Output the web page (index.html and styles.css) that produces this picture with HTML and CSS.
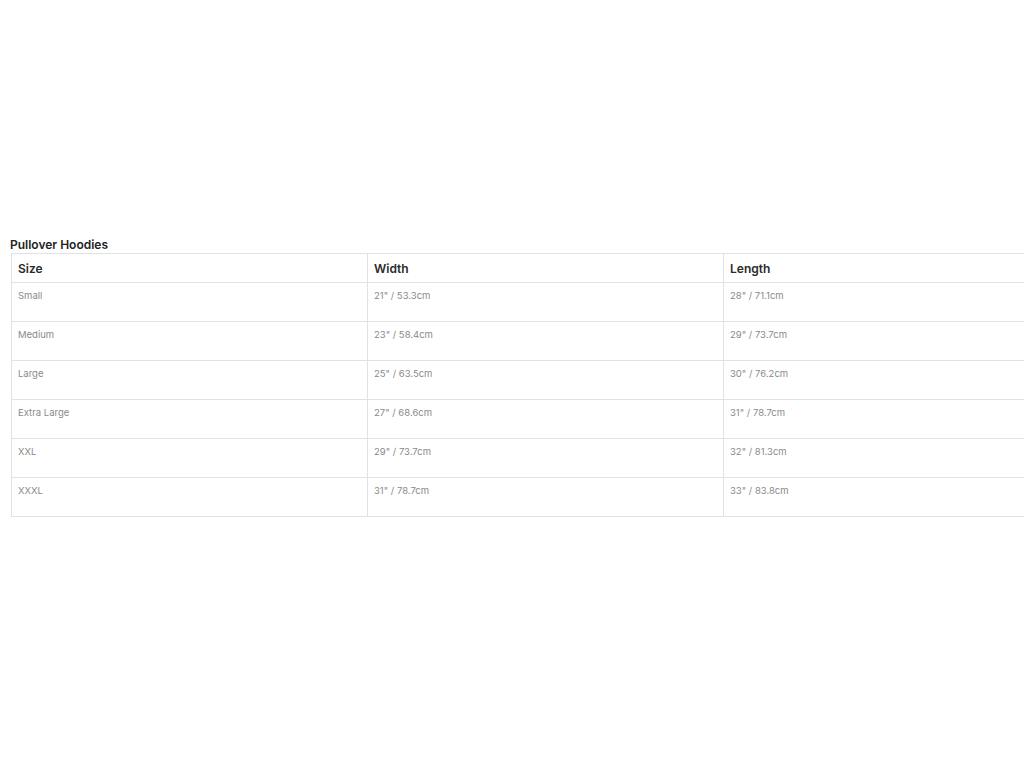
FILE: index.html
```html
<!DOCTYPE html>
<html lang="en">
<head>
    <meta charset="UTF-8">
    <meta name="viewport" content="width=device-width, initial-scale=1.0">
    <title>Size Chart</title>
    <link rel="stylesheet" href="styles.css">
</head>
<body>
    <div class="size-chart">
        <h3 class="chart-title">Pullover Hoodies</h3>
        <table class="size-table">
            <thead>
                <tr>
                    <th>Size</th>
                    <th>Width</th>
                    <th>Length</th>
                </tr>
            </thead>
            <tbody>
                <tr><td>Small</td><td>21" / 53.3cm</td><td>28" / 71.1cm</td></tr>
                <tr><td>Medium</td><td>23" / 58.4cm</td><td>29" / 73.7cm</td></tr>
                <tr><td>Large</td><td>25" / 63.5cm</td><td>30" / 76.2cm</td></tr>
                <tr><td>Extra Large</td><td>27" / 68.6cm</td><td>31" / 78.7cm</td></tr>
                <tr><td>XXL</td><td>29" / 73.7cm</td><td>32" / 81.3cm</td></tr>
                <tr><td>XXXL</td><td>31" / 78.7cm</td><td>33" / 83.8cm</td></tr>
            </tbody>
        </table>
    </div>
</body>
</html>
```

FILE: styles.css
```css
body {
    margin: 0;
    background: #ffffff;
    font-family: 'Inter', 'Open Sans', sans-serif;
}

.size-chart {
    padding: 238px 0 0 11px;
    overflow: hidden;
}

.chart-title {
    margin: 0 0 1px -1px;
    font-size: 12px;
    line-height: 14px;
    font-weight: 600;
    color: #222222;
}

.size-table {
    width: 1069px;
    border-collapse: collapse;
    table-layout: fixed;
}

.size-table th,
.size-table td {
    border: 1px solid #e2e2e2;
    text-align: left;
    vertical-align: top;
}

.size-table th {
    padding: 7px 6px 6px;
    font-size: 12px;
    line-height: 15px;
    font-weight: 600;
    color: #2a2a2a;
}

.size-table td {
    padding: 6px 6px 18px;
    font-size: 9.5px;
    line-height: 14px;
    color: #8a8a8a;
}
```
